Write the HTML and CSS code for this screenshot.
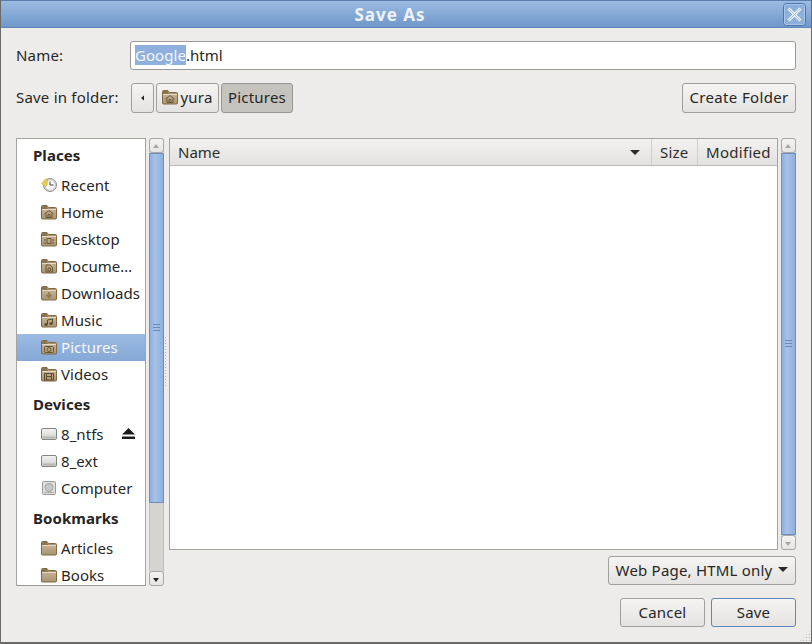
FILE: index.html
```html
<!DOCTYPE html>
<html lang="en">
<head>
<meta charset="utf-8">
<title>Save As</title>
<link rel="stylesheet" href="styles.css">
</head>
<body>
<svg class="defs" width="0" height="0" aria-hidden="true">
  <defs>
    <linearGradient id="fg" x1="0" y1="0" x2="0" y2="1"><stop offset="0" stop-color="#cfbea2"/><stop offset="1" stop-color="#a9936f"/></linearGradient>
    <linearGradient id="dg" x1="0" y1="0" x2="0" y2="1"><stop offset="0" stop-color="#f4f4f2"/><stop offset="1" stop-color="#cfcfcd"/></linearGradient>
    <symbol id="folder" viewBox="0 0 16 16">
      <path d="M.5 2.500c0-.6.4-1 1-1H6l1.500 2h7c.6 0 1 .4 1 1v9.500c0 .6-.4 1-1 1h-13c-.6 0-1-.4-1-1z" fill="url(#fg)" stroke="#7f6a45"/>
      <path d="M1 2.500c0-.4.200-.6.500-.6h4.300L7 4.500h8V5H1z" fill="#8a7550"/>
      <path d="M1 5h14v1H1z" fill="#e4d9c6"/>
    </symbol>
    <symbol id="drive" viewBox="0 0 16 16">
      <rect x=".5" y="2.500" width="15" height="11" rx="1.500" fill="url(#dg)" stroke="#85857f"/>
      <rect x="1.500" y="10.500" width="13" height="2" fill="#b8b8b5"/>
    </symbol>
  </defs>
</svg>
<div class="window">
  <header class="titlebar">
    <span class="title">Save As</span>
    <span class="close"><svg width="23" height="23" viewBox="0 0 23 23"><rect x=".5" y=".5" width="22" height="22" rx="3" fill="#8db0db" stroke="#4d76a6"/><rect x="1.500" y="1.500" width="20" height="20" rx="2" fill="none" stroke="#a9c5e8"/><path d="M5.500 5.500l12 12M17.500 5.500l-12 12" stroke="#eef3f9" stroke-width="3" fill="none"/><path d="M5.500 5.500l12 12M17.500 5.500l-12 12" stroke="#a3bfe3" stroke-width="1" fill="none"/></svg></span>
  </header>
  <main class="content">
    <div class="name-row">
      <label class="row-label">Name:</label>
      <div class="entry"><span class="sel">Google</span>.html</div>
    </div>
    <div class="folder-row">
      <span class="row-label">Save in folder:</span>
      <div class="path">
        <button class="btn back"><svg width="6" height="6" viewBox="0 0 6 6"><path d="M4 .5v5L1 3z" fill="#222"/></svg></button>
        <button class="btn yura"><svg class="ico" viewBox="0 0 16 16"><use href="#folder"/><path d="M3.500 10L8 6.500l4.500 3.500M5 9.500V13.500h6V9.500M7 13.500v-3h2v3" fill="none" stroke="#6d5836"/></svg>yura</button>
        <button class="btn current">Pictures</button>
      </div>
      <button class="btn create">Create Folder</button>
    </div>
    <div class="panes">
      <div class="side">
        <nav class="places">
          <h3 class="heading">Places</h3>
          <div class="item"><svg class="ico" viewBox="0 0 16 16"><circle cx="9" cy="8" r="6.500" fill="#d8d8d6" stroke="#8c8c8a"/><circle cx="9" cy="8" r="4.500" fill="#fafaf8"/><path d="M9 4.500V8h3.500" fill="none" stroke="#444"/><path d="M.5 6.500L5 1.500l1.500 1.500L6 8 4 10z" fill="#e8cd52" stroke="#b79f3a" stroke-width=".5"/></svg>Recent</div>
          <div class="item"><svg class="ico" viewBox="0 0 16 16"><use href="#folder"/><path d="M3.500 10L8 6.500l4.500 3.500M5 9.500V13.500h6V9.500M7 13.500v-3h2v3" fill="none" stroke="#6d5836"/></svg>Home</div>
          <div class="item"><svg class="ico" viewBox="0 0 16 16"><use href="#folder"/><path d="M6 7.500h4v5H6zM4 8v2M4 11v2M12 8v2M12 11v2" fill="none" stroke="#6d5836"/></svg>Desktop</div>
          <div class="item"><svg class="ico" viewBox="0 0 16 16"><use href="#folder"/><path d="M5 7h4l2.500 2.500v4.500H5zM7 10h2.500v3H7z" fill="none" stroke="#6d5836"/></svg><span class="clip">Docume…</span></div>
          <div class="item"><svg class="ico" viewBox="0 0 16 16"><use href="#folder"/><path d="M8 7v5M5.500 9.500L8 12.500l2.500-3" fill="none" stroke="#8f7a50" stroke-width="1.500"/></svg>Downloads</div>
          <div class="item"><svg class="ico" viewBox="0 0 16 16"><use href="#folder"/><path d="M6.500 12.500V8l5-1v4.500" fill="none" stroke="#5d4a2c"/><circle cx="5" cy="12.500" r="1.500" fill="#5d4a2c"/><circle cx="10" cy="11.500" r="1.500" fill="#5d4a2c"/></svg>Music</div>
          <div class="item active"><svg class="ico" viewBox="0 0 16 16"><use href="#folder"/><rect x="3.500" y="7.500" width="9" height="6" rx="1" fill="none" stroke="#6d5836"/><circle cx="8" cy="10.500" r="2" fill="none" stroke="#6d5836"/></svg>Pictures</div>
          <div class="item"><svg class="ico" viewBox="0 0 16 16"><use href="#folder"/><path d="M3.500 7.500h9v6.500h-9zM5.500 7.500V14M10.500 7.500V14M5.500 10.500h5" fill="none" stroke="#5d4a2c"/></svg>Videos</div>
          <h3 class="heading">Devices</h3>
          <div class="item"><svg class="ico" viewBox="0 0 16 16"><use href="#drive"/></svg>8_ntfs<svg class="eject" width="13" height="11" viewBox="0 0 13 11"><path d="M6.500 0L13 6.500H0zM0 8.500h13V11H0z" fill="#1c1c1c"/></svg></div>
          <div class="item"><svg class="ico" viewBox="0 0 16 16"><use href="#drive"/></svg>8_ext</div>
          <div class="item"><svg class="ico" viewBox="0 0 16 16"><rect x="1.500" y="1.500" width="13" height="13" rx="1" fill="#dededc" stroke="#9a9a98"/><circle cx="8" cy="7.500" r="4" fill="#c6c8c6" stroke="#a4a6a4"/><path d="M3 12.500h10" stroke="#b0b0ae"/></svg>Computer</div>
          <h3 class="heading">Bookmarks</h3>
          <div class="item"><svg class="ico" viewBox="0 0 16 16"><use href="#folder"/></svg>Articles</div>
          <div class="item"><svg class="ico" viewBox="0 0 16 16"><use href="#folder"/></svg>Books</div>
        </nav>
        <div class="scrollbar">
          <span class="sb-btn up"></span>
          <span class="thumb side-thumb"><i class="grip"></i></span>
          <span class="trough"></span>
          <span class="sb-btn down dark"></span>
        </div>
      </div>
      <div class="handle"></div>
      <div class="files-col">
        <div class="files-wrap">
          <div class="files">
            <div class="file-head">
              <div class="col col-name">Name<i class="arrow"></i></div>
              <div class="col col-size">Size</div>
              <div class="col col-mod">Modified</div>
            </div>
          </div>
          <div class="scrollbar">
            <span class="sb-btn up"></span>
            <span class="thumb full-thumb"><i class="grip"></i></span>
            <span class="sb-btn down"></span>
          </div>
        </div>
        <div class="filter-row">
          <button class="btn filter">Web Page, HTML only<i class="arrow"></i></button>
        </div>
      </div>
    </div>
    <div class="actions">
      <button class="btn cancel">Cancel</button>
      <button class="btn save">Save</button>
    </div>
  </main>
  <span class="resize"></span>
</div>
</body>
</html>
```
FILE: styles.css
```css
* { box-sizing: border-box; }
html, body { margin: 0; padding: 0; }
body { width: 812px; height: 644px; overflow: hidden; font-family: "Noto Sans", "Open Sans", sans-serif; font-size: 15px; letter-spacing: .05px; color: #28261f; }
.defs { position: absolute; }
.window { position: relative; width: 812px; height: 644px; background: #edeceb; border: 1px solid #6b6a68; border-top: 0; border-bottom-width: 2px; display: flex; flex-direction: column; }
.titlebar { flex: 0 0 28px; display: flex; align-items: center; justify-content: center; position: relative; padding-right: 32px; background: linear-gradient(#9dbbe2, #6f97c9); border-top: 1px solid #5a7fae; border-bottom: 1px solid #5f88bb; }
.title { color: #eef3f9; font-weight: 700; font-size: 17px; letter-spacing: 1px; }
.close { position: absolute; right: 5px; top: 2px; display: flex; }
.content { flex: 1; display: flex; flex-direction: column; padding: 13px 15px 0 15px; }
.row-label { color: #28261f; white-space: nowrap; letter-spacing: .2px; }
.name-row { display: flex; align-items: center; height: 29px; }
.name-row .row-label { width: 114px; padding-bottom: 2px; }
.entry { flex: 1; height: 29px; background: #fff; border: 1px solid #9b9a96; border-radius: 3px; padding-left: 4px; line-height: 27px; }
.sel { background: #8fb0de; color: #f4f7fb; display: inline-block; line-height: 20px; }
.folder-row { display: flex; align-items: center; margin-top: 13px; height: 30px; }
.folder-row .row-label { width: 115px; padding-bottom: 2px; }
.path { display: flex; gap: 2px; flex: 1; height: 30px; }
.btn { font: inherit; letter-spacing: .2px; color: #28261f; height: 29px; padding: 0 0 2px; border: 1px solid #a09f9b; border-radius: 3px; background: linear-gradient(#f5f4f3, #e4e3e1); display: inline-flex; align-items: center; justify-content: center; white-space: nowrap; }
.path .btn, .create { height: 30px; }
.path .back { width: 23px; padding: 0; }
.yura { width: 63px; gap: 2px; }
.current { width: 72px; background: #c6c3be; border-color: #9a9792; }
.create { width: 114px; letter-spacing: .35px; }
.ico { width: 16px; height: 16px; flex: none; }
.panes { flex: 0 0 448px; display: flex; margin-top: 25px; }
.side { display: flex; flex: 0 0 148px; height: 448px; gap: 3px; }
.places { flex: 0 0 130px; height: 448px; overflow: hidden; background: #fff; border: 1px solid #a5a4a0; border-bottom-color: #9b9a96; }
.heading { margin: 0; height: 33px; line-height: 32px; padding-left: 16px; font-size: 15px; font-weight: 700; color: #26241f; }
.item { position: relative; height: 27px; display: flex; align-items: center; padding: 0 0 2px 24px; gap: 4px; white-space: nowrap; }
.item.active { background: linear-gradient(#9cbbe3, #85a8d6); color: #f6f8fb; }
.clip { overflow: hidden; }
.eject { position: absolute; left: 105px; top: 7px; }
.scrollbar { flex: 0 0 15px; display: flex; flex-direction: column; background: #d5d4d1; border-radius: 3px; }
.sb-btn { flex: 0 0 15px; position: relative; background: linear-gradient(#f4f3f2, #e6e5e3); border: 1px solid #a9a8a4; border-radius: 3px; }
.sb-btn::after { content: ""; position: absolute; left: 3px; top: 5px; border: 3.5px solid transparent; border-top: 0; border-bottom: 4px solid #a8a7a3; }
.sb-btn.down::after { border-bottom: 0; border-top: 4px solid #a8a7a3; top: 6px; }
.sb-btn.down.dark::after { border-top-color: #222; }
.thumb { flex: 1; position: relative; background: linear-gradient(90deg, #8fb0de, #a5c2e8 40%, #8fb0de); border: 1px solid #6c8fc0; }
.side-thumb { flex: 0 0 350px; }
.trough { flex: 1; background: #d5d4d1; border-left: 1px solid #c0bfbb; border-right: 1px solid #c0bfbb; }
.grip { position: absolute; left: 3px; width: 7px; top: 50%; height: 7px; margin-top: -4px; border-top: 1px solid #6a8dbd; border-bottom: 1px solid #6a8dbd; }
.grip::after { content: ""; position: absolute; left: 0; right: 0; top: 2px; height: 1px; background: #6a8dbd; }
.handle { flex: 0 0 5px; background: radial-gradient(circle, #b5b4b0 .7px, transparent .8px) 0 0/3px 3px; background-clip: content-box; padding: 198px 1px 200px 1px; }
.files-col { flex: 1; display: flex; flex-direction: column; }
.files-wrap { display: flex; height: 412px; gap: 3px; }
.files { flex: 1; background: #fff; border: 1px solid #a5a4a0; }
.file-head { display: flex; height: 27px; background: linear-gradient(#f3f2f1, #e2e1df); border-bottom: 1px solid #b9b8b4; }
.col { display: flex; align-items: center; padding: 0 0 1px 8px; border-right: 1px solid #cfcec9; position: relative; color: #2e2c28; letter-spacing: .2px; }
.col-name { flex: 1; letter-spacing: 0; }
.col-size { width: 46px; }
.col-mod { width: 79px; border-right: 0; letter-spacing: .3px; }
.arrow { display: block; width: 0; height: 0; border: 5px solid transparent; border-bottom: 0; border-top: 5px solid #2a2a2a; }
.col-name .arrow { position: absolute; right: 11px; top: 11px; }
.filter-row { display: flex; justify-content: flex-end; margin-top: 6px; }
.filter { width: 188px; gap: 6px; }
.actions { display: flex; justify-content: flex-end; gap: 6px; margin-top: 12px; }
.cancel, .save { width: 85px; }
.save { border-color: #5e86b8; }
.resize { position: absolute; right: 0; bottom: 0; width: 12px; height: 12px; background: radial-gradient(circle, #b0afab .8px, transparent 1px) 0 0/3px 3px; clip-path: polygon(100% 0, 100% 100%, 0 100%); }
```
